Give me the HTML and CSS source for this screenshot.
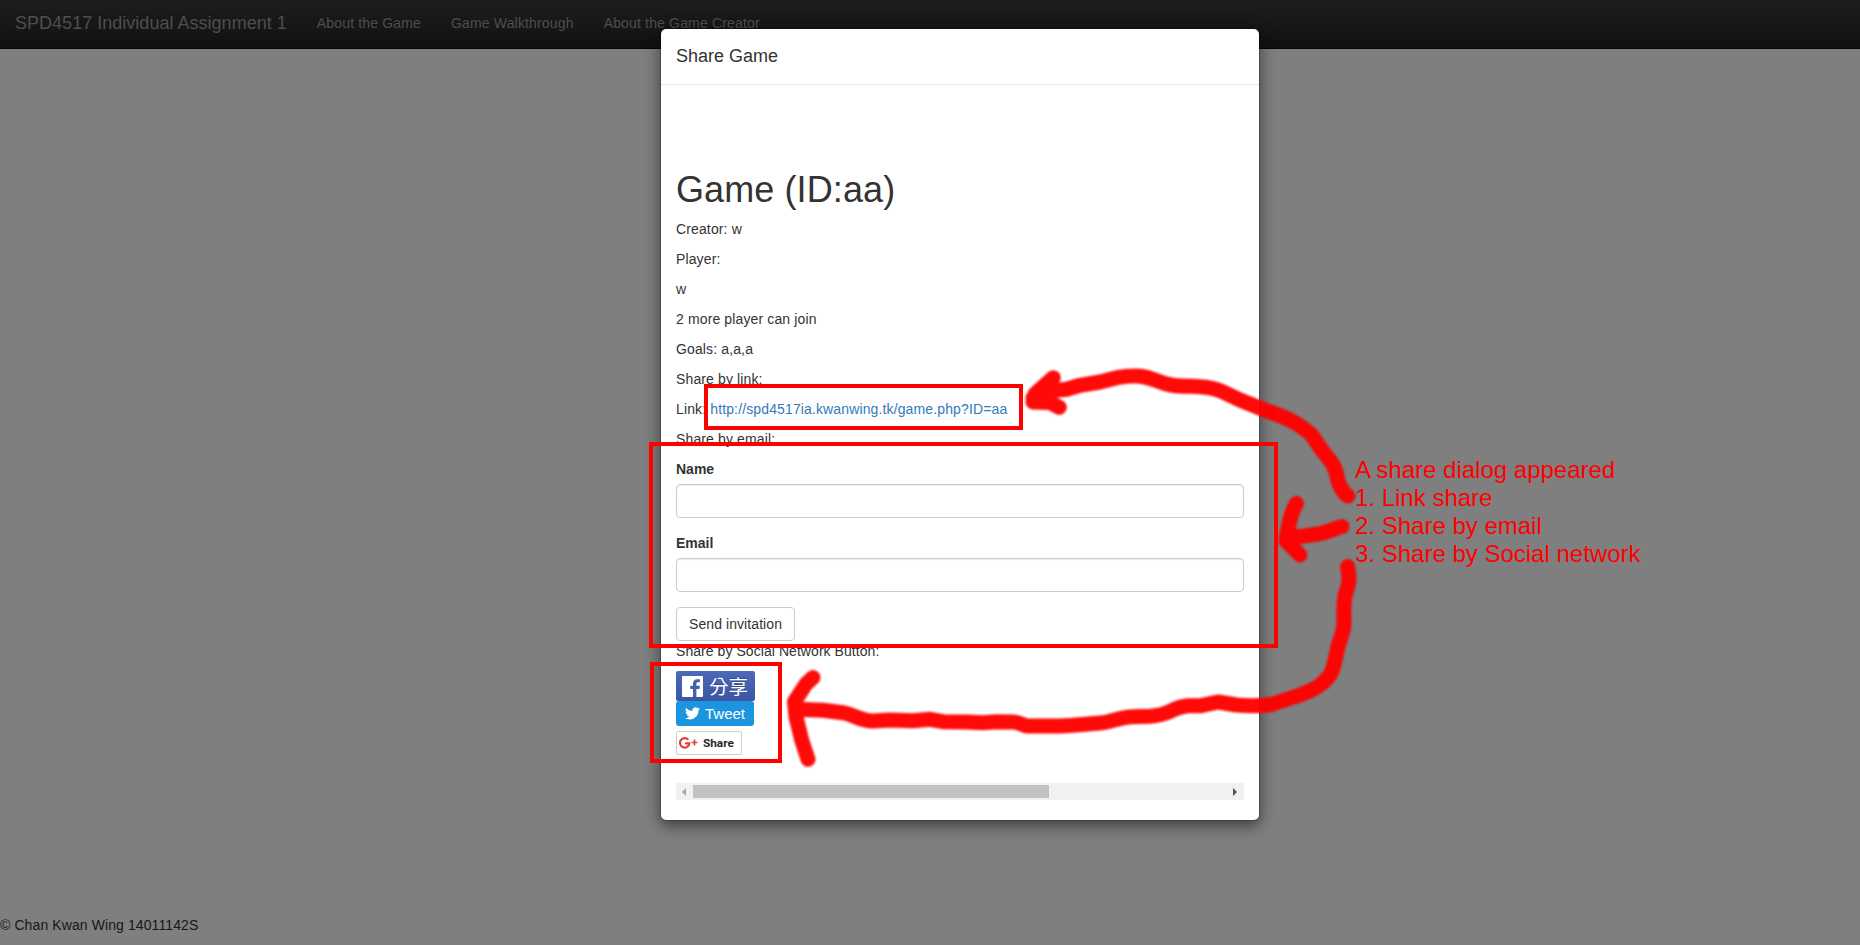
FILE: index.html
```html
<!DOCTYPE html>
<html lang="en">
<head>
<meta charset="utf-8">
<title>SPD4517 Individual Assignment 1</title>
<link rel="stylesheet" href="styles.css">
</head>
<body>
<div class="page">
  <nav class="navbar">
    <a class="brand">SPD4517 Individual Assignment 1</a>
    <a class="nav-link">About the Game</a>
    <a class="nav-link">Game Walkthrough</a>
    <a class="nav-link">About the Game Creator</a>
  </nav>
  <footer class="footer">© Chan Kwan Wing 14011142S</footer>
</div>

<div class="backdrop">
  <section class="modal">
    <header class="modal-header"><h4 class="modal-title">Share Game</h4></header>
    <div class="modal-body">
      <h1 class="game-title">Game (ID:aa)</h1>
      <p>Creator: w</p>
      <p>Player:</p>
      <p>w</p>
      <p>2 more player can join</p>
      <p>Goals: a,a,a</p>
      <p>Share by link:</p>
      <p>Link: <a class="link">http://spd4517ia.kwanwing.tk/game.php?ID=aa</a></p>
      <p>Share by email:</p>
      <form class="form">
        <label class="field"><span class="label">Name</span><input class="control" type="text"></label>
        <label class="field"><span class="label">Email</span><input class="control" type="text"></label>
        <button class="btn" type="button">Send invitation</button>
      </form>
      <p class="social-title">Share by Social Network Button:</p>
      <div class="social">
        <a class="fb">
          <svg class="fb-icon" viewBox="0 0 21 21"><rect width="21" height="21" rx="1" fill="#fff"/><path fill="#4661ad" d="M11 21v-8H8.300V9.800H11V7.500C11 4.800 12.500 3.200 15.200 3.200h2.700v3h-1.800c-1.300 0-1.700.6-1.700 1.700v1.900h3.500l-.5 3.200h-3v8z"/></svg>
          <span>分享</span>
        </a>
        <a class="tweet">
          <svg class="tweet-icon" viewBox="0 0 24 20"><path fill="#fff" d="M24 2.400a9.800 9.800 0 0 1-2.800.8A4.900 4.900 0 0 0 23.300.500a9.900 9.900 0 0 1-3.100 1.200A4.900 4.900 0 0 0 11.800 6.100 14 14 0 0 1 1.700 1a4.900 4.900 0 0 0 1.500 6.500A4.900 4.900 0 0 1 1 6.900a4.900 4.900 0 0 0 3.900 4.900 4.900 4.900 0 0 1-2.200.1 4.900 4.900 0 0 0 4.600 3.400A9.900 9.900 0 0 1 0 17.300 14 14 0 0 0 21.500 4.900 10 10 0 0 0 24 2.400z"/></svg>
          <span>Tweet</span>
        </a>
        <a class="gplus">
          <svg class="gplus-icon" viewBox="0 0 19 12"><path fill="none" stroke="#db4437" stroke-width="2.200" d="M9.300 2.800A4.700 4.700 0 1 0 10.400 6.300H6"/><path stroke="#db4437" stroke-width="1.700" d="M12.600 5.500h5.800M15.500 2.600v5.800"/></svg>
          <span>Share</span>
        </a>
      </div>
      <div class="scrollbar">
        <i class="arrow arrow-left"></i>
        <i class="thumb"></i>
        <i class="arrow arrow-right"></i>
      </div>
    </div>
  </section>
</div>

<div class="notes">
  <svg class="ink" viewBox="0 0 1860 945">
    <g class="brush">
      <path d="M1348 496C1343 493 1339 485 1337.500 479C1337 467 1328 458 1321.700 450L1311.700 435C1306 430 1300 425 1293 421.700C1285 417 1275 414 1266.700 410.700L1240 400L1222 391.500C1214 388 1207 387 1200 386.700C1190 386 1176 387 1166.700 384C1155 381 1147 375 1133 376C1126 376 1122 377 1116.700 377.700L1100 382L1080 385.300L1066.700 389.300L1050 390.700L1033 398"/>
      <path d="M1053.300 377.700L1035 394L1033 402L1050 402.500L1059.300 407.300"/>
      <path d="M1342 526.700C1335 528 1327 533 1318 534L1300 536.500H1288"/>
      <path d="M1296.500 503.500C1290 514 1288 528 1286 541L1300 555"/>
      <path d="M1347.700 566.700C1350 581 1349 584 1346 592C1343 602 1344 612 1344 623C1344 632 1340 639 1338 646.700L1335 660C1332 674 1330 677 1320 685C1314 690 1307 692 1300 695L1273 704C1262 706 1248 706 1236.700 705L1218 702L1201 705.700H1188C1175 707 1175 710 1166 713C1152 718 1145 716 1133 716.700C1119 717 1113 722 1100 723L1073 725.300L1060 726H1026.700C1022 725 1019 722 1013 722L996.700 721.700L983 722.700L966.700 722L943 721.700L930 719.300L913 720.700L890 720L873 721C860 721 855 715 843 712.700L823 710.300L796.700 709.300"/>
      <path d="M813 677.500L806 684L794.500 701.700L796 716.700L801.700 740L808 759.300"/>
    </g>
  </svg>
  <div class="frame frame-link"></div>
  <div class="frame frame-email"></div>
  <div class="frame frame-social"></div>
  <div class="note-text">A share dialog appeared<br>1. Link share<br>2. Share by email<br>3. Share by Social network</div>
</div>
</body>
</html>
```

FILE: styles.css
```css
* { box-sizing: border-box; }

body {
  margin: 0;
  height: 945px;
  overflow: hidden;
  background: #fff;
  color: #333;
  font: 14px/20px "Liberation Sans", Arial, "Noto Sans CJK TC", sans-serif;
}

p, h1, h4 { margin: 0; font-weight: 400; }

.page {
  display: flex;
  flex-direction: column;
  justify-content: space-between;
  height: 945px;
  padding-bottom: 10px;
}
.footer { letter-spacing: .1px; }

.navbar {
  display: flex;
  height: 49px;
  padding-bottom: 2px;
  align-items: center;
  border-bottom: 1px solid #080808;
  background: linear-gradient(#3b3b3b, #222);
  color: #9d9d9d;
  text-shadow: 0 -1px 0 rgba(0, 0, 0, .25);
}
.brand { padding: 0 15px; font-size: 18px; letter-spacing: .02px; }
.nav-link { padding: 0 15px; letter-spacing: .16px; }

.backdrop {
  position: absolute;
  inset: 0;
  padding: 28px 0 0 660px;
  background: rgba(0, 0, 0, .5);
}

.modal {
  width: 600px;
  height: 793px;
  border: 1px solid rgba(0, 0, 0, .2);
  border-radius: 6px;
  background: #fff;
  background-clip: padding-box;
  box-shadow: 0 5px 15px rgba(0, 0, 0, .5);
}
.modal-header { height: 56px; padding: 15px; border-bottom: 1px solid #e5e5e5; }
.modal-title { font-size: 18px; line-height: 25px; }
.modal-body { padding: 85px 15px 0; }
.modal-body p { margin-bottom: 10px; letter-spacing: .13px; }
.modal-body .social-title { letter-spacing: .06px; }
.game-title { margin-bottom: 9px; font-size: 36px; line-height: 40px; letter-spacing: .1px; }
.link { color: #337ab7; }

.field { display: block; margin-bottom: 15px; }
.label { display: block; margin-bottom: 5px; font-weight: 700; }
.control {
  display: block;
  width: 100%;
  height: 34px;
  border: 1px solid #ccc;
  border-radius: 4px;
  background: #fff;
  box-shadow: inset 0 1px 1px rgba(0, 0, 0, .075);
}
.btn {
  display: block;
  width: 119px;
  height: 34px;
  padding: 6px 12px;
  border: 1px solid #ccc;
  border-radius: 4px;
  background: #fff;
  color: #333;
  font: inherit;
  letter-spacing: .08px;
  white-space: nowrap;
}

.social { display: flex; flex-direction: column; align-items: flex-start; }
.fb, .tweet, .gplus { display: flex; align-items: center; white-space: nowrap; }
.fb {
  width: 79px;
  height: 30px;
  padding-left: 6px;
  gap: 6px;
  border-radius: 2px;
  background: linear-gradient(#4c69ba, #3b55a0);
  color: #fff;
  font: 19.5px/28px "Noto Sans CJK TC", sans-serif;
  text-shadow: 0 -1px 0 #354c8c;
}
.fb-icon { width: 21px; height: 21px; }
.tweet {
  width: 78px;
  height: 25px;
  padding-left: 9px;
  gap: 5px;
  border-radius: 3px;
  background: #1b95e0;
  color: #fff;
  font-size: 15px;
}
.tweet-icon { width: 15px; height: 13px; }
.gplus {
  width: 66px;
  height: 24px;
  margin-top: 5px;
  padding-left: 2px;
  gap: 5px;
  border: 1px solid #d0d0d0;
  border-radius: 2px;
  color: #262626;
  font: 700 11.800px/20px Roboto, sans-serif;
}
.gplus-icon { width: 19px; height: 12px; }

.scrollbar {
  display: flex;
  align-items: center;
  height: 17px;
  margin-top: 28px;
  padding: 0 7px 0 6px;
  background: #f1f1f1;
}
.arrow { border: 4px solid transparent; }
.arrow-left { border-left: 0; border-right-color: #a3a3a3; }
.arrow-right { margin-left: auto; border-right: 0; border-left-color: #505050; }
.thumb { width: 356px; height: 13px; margin-left: 7px; background: #c1c1c1; }

/* Hand-drawn annotations over the whole page */
.notes { position: absolute; inset: 0; pointer-events: none; }
.ink { position: absolute; inset: 0; width: 1860px; height: 945px; }
.brush {
  fill: none;
  stroke: #f00;
  stroke-width: 15px;
  stroke-linecap: round;
  stroke-linejoin: round;
  opacity: .96;
  filter: blur(1.2px);
}
.frame { position: absolute; border: 4px solid #f00; }
.frame-link { left: 704px; top: 384px; width: 319px; height: 46px; }
.frame-email { left: 649px; top: 442px; width: 629px; height: 206px; }
.frame-social { left: 650px; top: 662px; width: 132px; height: 101px; }
.note-text {
  position: absolute;
  left: 1355px;
  top: 456px;
  color: #f00;
  font-size: 24px;
  line-height: 28px;
  white-space: nowrap;
}
```
